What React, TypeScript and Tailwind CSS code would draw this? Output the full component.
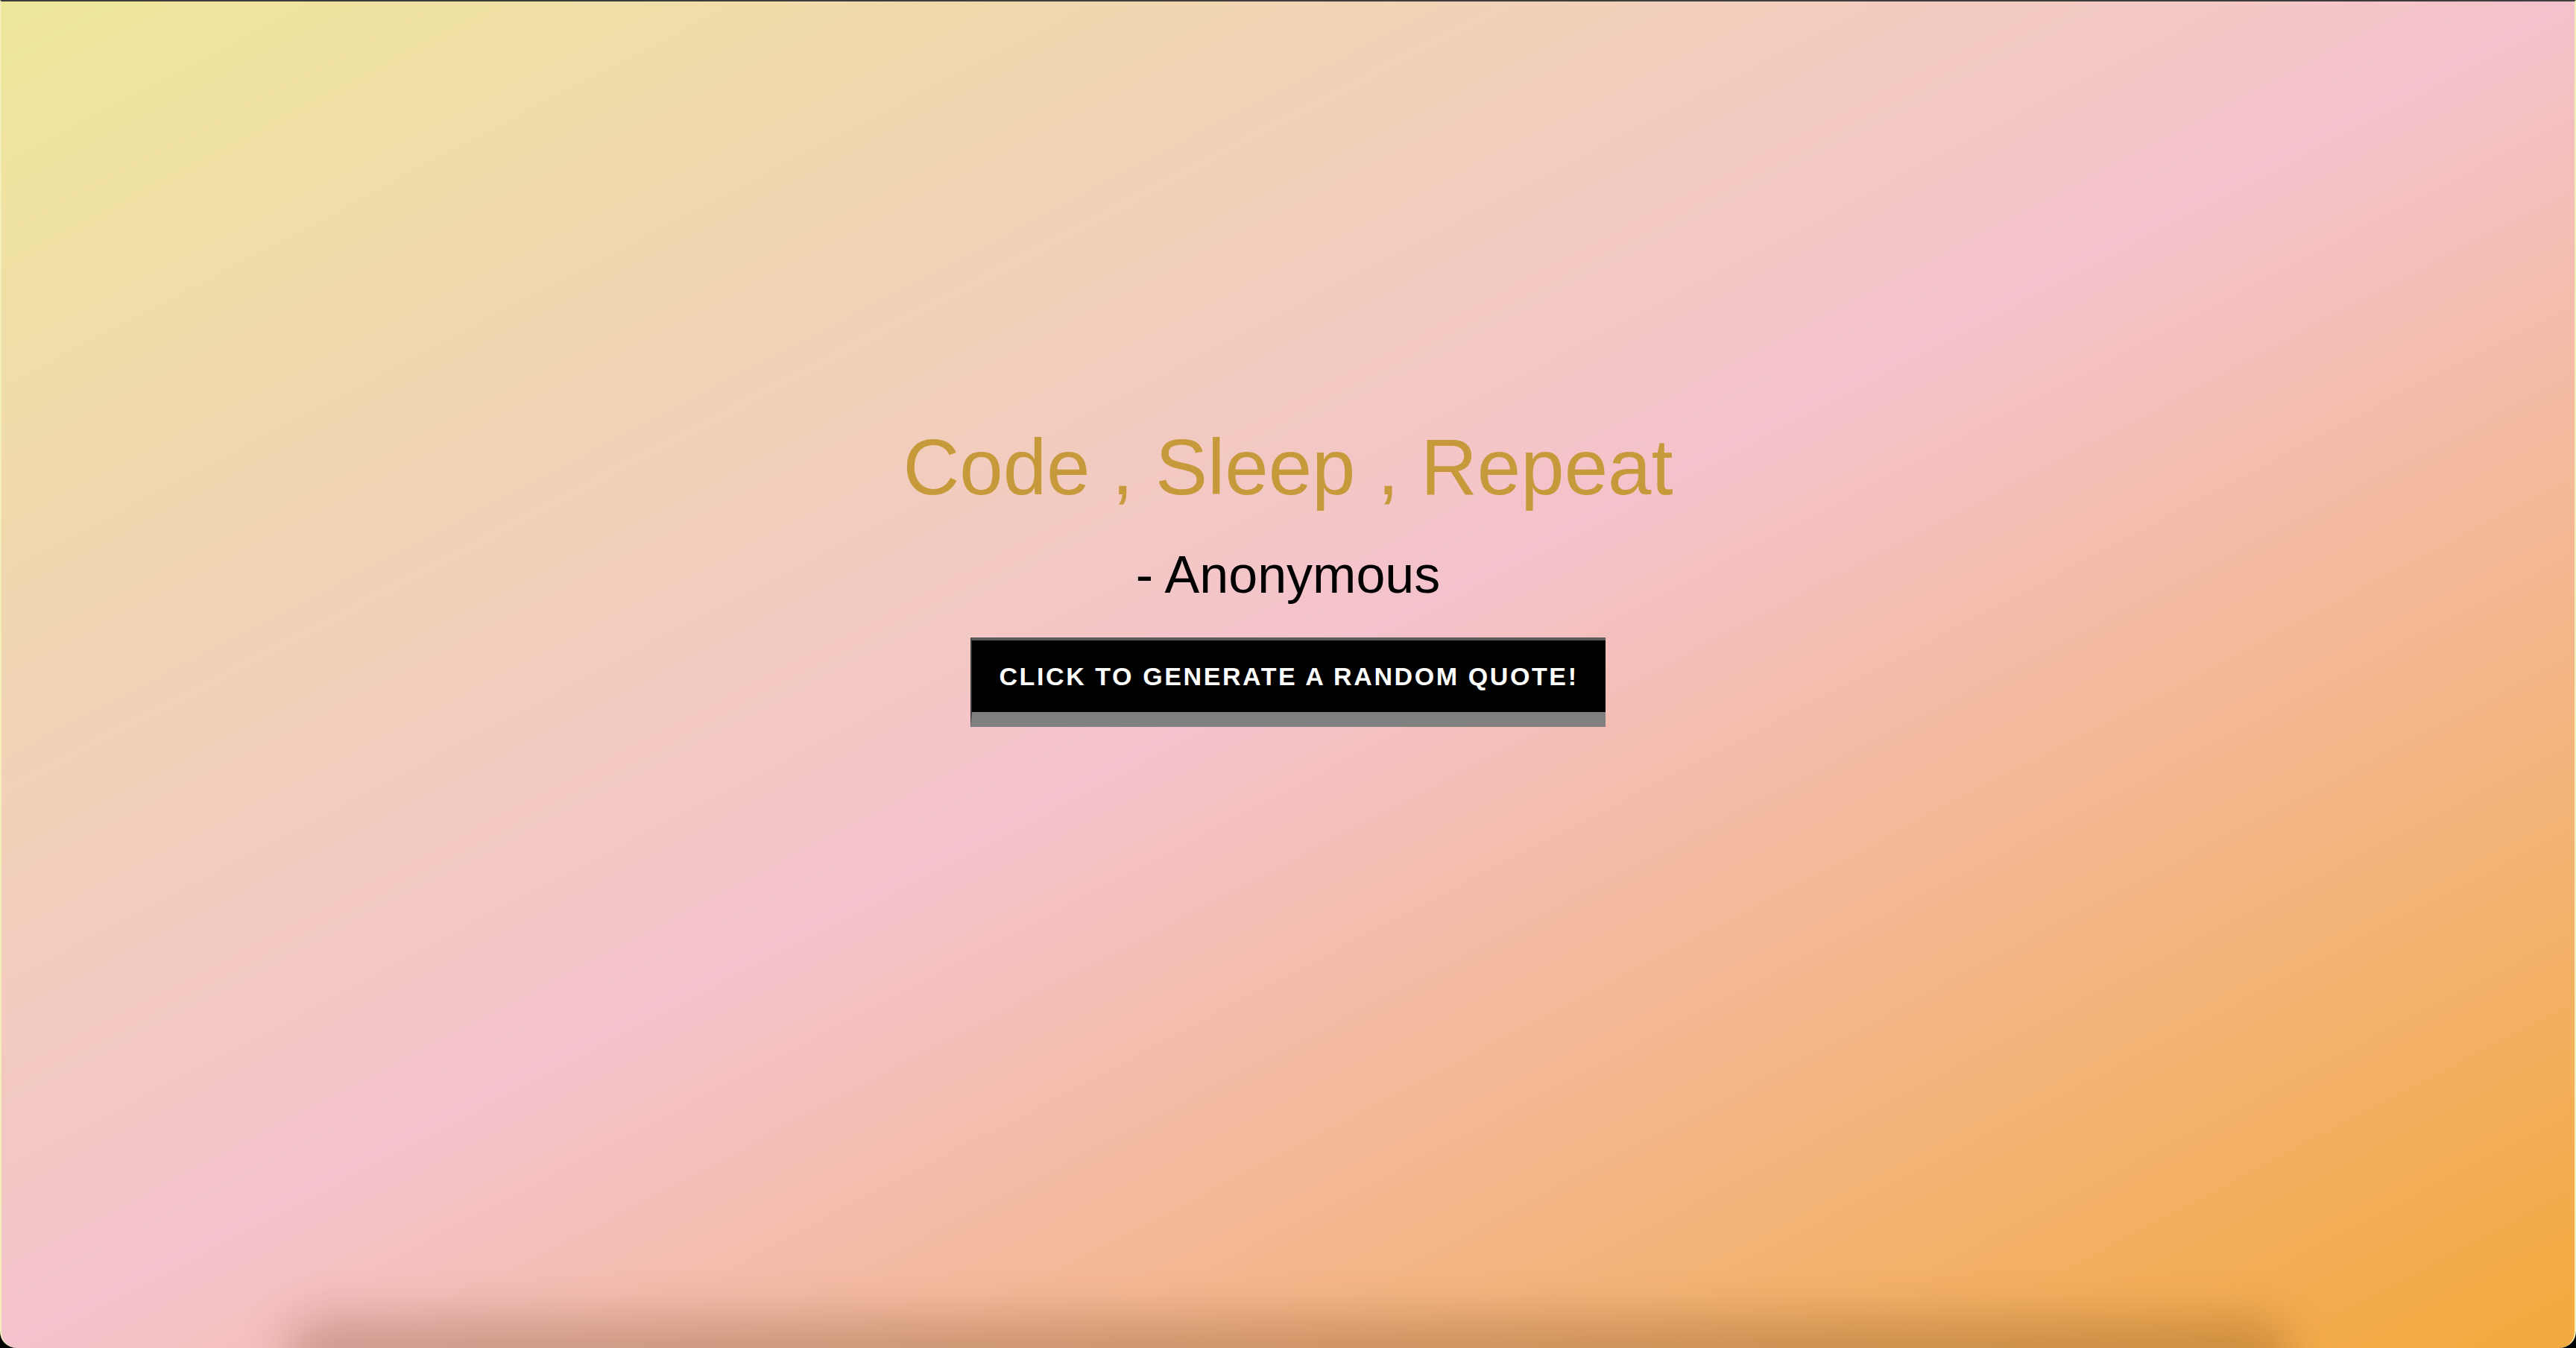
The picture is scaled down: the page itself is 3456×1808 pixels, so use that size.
export default function App() {
  return (
    <div className="w-full h-[1808px] bg-black overflow-hidden">
      <div className="relative h-full w-full overflow-hidden rounded-b-[22px] border-t-2 border-[#3d3d3d] border-x-2 border-x-[#f4eeb8] bg-[linear-gradient(to_bottom_right,#eee79a,#f4c2cc,#f3a93c)] font-['Liberation_Sans',Arial,sans-serif]">
        <div className="flex flex-col items-center pt-[565px]">
          <h1 className="text-[105px] leading-[120px] text-[#c6993a]">Code , Sleep , Repeat</h1>
          <p className="mt-[44px] text-[70px] leading-[80px] text-black">- Anonymous</p>
          <button className="mt-[44px] w-[852px] h-[120px] bg-black border-t-4 border-t-[#5a5a5a] border-l-2 border-l-[#3a3a3a] border-b-[20px] border-b-[#808080] text-white font-bold uppercase text-[34px] tracking-[2.6px]">
            Click to generate a random quote!
          </button>
        </div>
        {/* bottom window shadow */}
        <div className="absolute left-[380px] right-[380px] bottom-[-70px] h-[110px] rounded-full bg-[#5a3010]/25 blur-[30px]" />
      </div>
    </div>
  );
}
